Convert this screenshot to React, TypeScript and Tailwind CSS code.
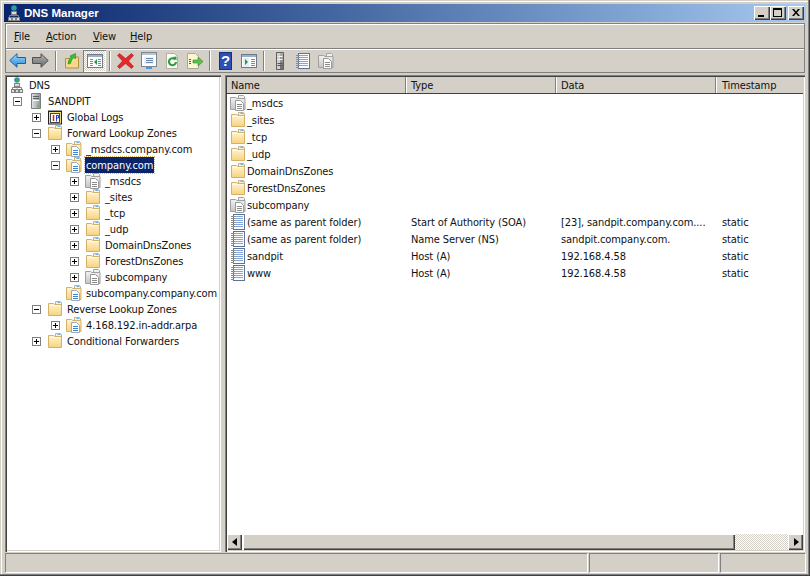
import React from 'react';

const bevelIn =
  'shadow-[inset_1px_1px_0_#808080,inset_2px_2px_0_#404040,inset_-1px_-1px_0_#fff,inset_-2px_-2px_0_#d4d0c8]';
const bevelBtn =
  'shadow-[inset_1px_1px_0_#fff,inset_-1px_-1px_0_#404040,inset_-2px_-2px_0_#808080]';

const Grads = () => (
  <svg width="0" height="0" className="absolute">
    <defs>
      <linearGradient id="fold" x1="0" y1="0" x2="0" y2="1">
        <stop offset="0" stopColor="#fff6d6" />
        <stop offset="1" stopColor="#f8d27c" />
      </linearGradient>
      <linearGradient id="grayfold" x1="0" y1="0" x2="0" y2="1">
        <stop offset="0" stopColor="#f2f2f2" />
        <stop offset="1" stopColor="#c4c4c4" />
      </linearGradient>
      <linearGradient id="tower" x1="0" y1="0" x2="1" y2="0">
        <stop offset="0" stopColor="#e4e6e8" />
        <stop offset="1" stopColor="#8e9296" />
      </linearGradient>
      <linearGradient id="back" x1="0" y1="0" x2="0" y2="1">
        <stop offset="0" stopColor="#a4dcfa" />
        <stop offset="1" stopColor="#1f86dc" />
      </linearGradient>
      <linearGradient id="fwd" x1="0" y1="0" x2="0" y2="1">
        <stop offset="0" stopColor="#b4b4b4" />
        <stop offset="1" stopColor="#6a6a6a" />
      </linearGradient>
    </defs>
  </svg>
);

const Folder = () => (
  <svg width="16" height="16" viewBox="0 0 16 16" className="shrink-0">
    <path d="M8.500 .5h5l1 1v3h-6z" fill="#f6f3e4" stroke="#c4b48a" />
    <rect x="10.500" y="1" width="3" height="1" fill="#6fb0e2" />
    <path d="M1.500 2.500h5l1.500 1h6.500v11h-13z" fill="url(#fold)" stroke="#d3b169" />
    <path d="M2.500 4.500h11" stroke="#fffbe8" />
  </svg>
);

const Doc = ({ x, y, line, edge }: { x: number; y: number; line: string; edge: string }) => (
  <g>
    <path d={`M${x + 0.5} ${y + 0.5}h5l3 3v7h-8z`} fill="#fff" stroke={edge} />
    <path d={`M${x + 2} ${y + 4.5}h5M${x + 2} ${y + 6.5}h5M${x + 2} ${y + 8.5}h5`} stroke={line} />
  </g>
);

const ZoneFolder = () => (
  <svg width="16" height="16" viewBox="0 0 16 16" className="shrink-0">
    <path d="M8.500 .5h5l1 1v3h-6z" fill="#f6f3e4" stroke="#c4b48a" />
    <rect x="10.500" y="1" width="3" height="1" fill="#6fb0e2" />
    <path d="M.5 2.500h5l1.500 1h8v11h-14.500z" fill="url(#fold)" stroke="#d3b169" />
    <Doc x={5} y={5} line="#3f86cc" edge="#98a8b8" />
  </svg>
);

const GrayZone = () => (
  <svg width="16" height="16" viewBox="0 0 16 16" className="shrink-0">
    <path d="M8.500 .5h5l1 1v3h-6z" fill="#f1f1f1" stroke="#a4a4a4" />
    <path d="M.5 2.500h5l1.500 1h8v11h-14.500z" fill="url(#grayfold)" stroke="#a0a0a0" />
    <Doc x={5} y={5} line="#8a8a8a" edge="#9a9a9a" />
  </svg>
);

const RecordIcon = () => (
  <svg width="16" height="16" viewBox="0 0 16 16" className="shrink-0">
    <rect x="3.500" y=".5" width="11" height="15" fill="#fdfdff" stroke="#5f7396" />
    <path d="M5 2.500h8M5 4.500h8M5 6.500h8M5 8.500h8M5 10.500h8M5 12.500h8" stroke="#82a6dc" />
    <path d="M1 2.500h4M1 4.500h4M1 6.500h4M1 8.500h4M1 10.500h4M1 12.500h4M1 14.500h3" stroke="#8c8c8c" />
  </svg>
);

const Server = () => (
  <svg width="16" height="16" viewBox="0 0 16 16" className="shrink-0">
    <path d="M3.500 .5h9v15h-9z" fill="url(#tower)" stroke="#7a7e82" />
    <path d="M5 3.500h6M5 5.500h6" stroke="#5e6266" />
    <path d="M5 7.500h6" stroke="#fff" />
    <rect x="9" y="12" width="2" height="2" fill="#58c62e" />
  </svg>
);

const DnsIcon = () => (
  <svg width="16" height="16" viewBox="0 0 16 16" className="shrink-0">
    <circle cx="8" cy="3" r="2.800" fill="#2a8fd0" />
    <path d="M7 1.500h2l1 2-2 1.500-1-1.500z" fill="#3cae3a" />
    <rect x="5.500" y="6.500" width="5" height="3" fill="#dcdcdc" stroke="#808080" />
    <path d="M8 9.500v2M3.500 12v-1.500h9v1.500" fill="none" stroke="#808080" />
    <rect x="2.500" y="12.500" width="3" height="3" fill="#dcdcdc" stroke="#808080" />
    <rect x="6.500" y="12.500" width="3" height="3" fill="#dcdcdc" stroke="#808080" />
    <rect x="10.500" y="12.500" width="3" height="3" fill="#dcdcdc" stroke="#808080" />
  </svg>
);

const LogsIcon = () => (
  <svg width="16" height="16" viewBox="0 0 16 16" className="shrink-0">
    <path d="M1.500 1.500h13" stroke="#333" strokeDasharray="1 1" />
    <rect x="1.500" y="2.500" width="13" height="12.500" fill="#f7e07a" stroke="#222" />
    <rect x="3.500" y="4.500" width="9" height="9" fill="#fff" stroke="#444" />
    <path d="M6.500 6v6" stroke="#d8201c" strokeWidth="1.500" />
    <path d="M9.500 6.500h2v2.500h-2M9.500 6v6.500" fill="none" stroke="#2440c4" />
  </svg>
);

type Icon = 'folder' | 'zone' | 'gray' | 'logs' | 'server' | 'dns';

const icons: Record<Icon, React.ReactNode> = {
  folder: <Folder />,
  zone: <ZoneFolder />,
  gray: <GrayZone />,
  logs: <LogsIcon />,
  server: <Server />,
  dns: <DnsIcon />,
};

const Expander = ({ open }: { open?: boolean }) => (
  <span className="relative block w-[9px] h-[9px] shrink-0 border border-[#7f7f7f] bg-white">
    <span className="absolute left-[1px] top-[3px] w-[5px] h-[1px] bg-black" />
    {!open && <span className="absolute left-[3px] top-[1px] w-[1px] h-[5px] bg-black" />}
  </span>
);

const indent = ['pl-[6px]', 'pl-[25px]', 'pl-[44px]', 'pl-[63px]'];

type TreeItem = { level: number; icon: Icon; label: string; exp?: 'plus' | 'minus'; selected?: boolean };

const tree: TreeItem[] = [
  { level: 0, icon: 'server', label: 'SANDPIT', exp: 'minus' },
  { level: 1, icon: 'logs', label: 'Global Logs', exp: 'plus' },
  { level: 1, icon: 'folder', label: 'Forward Lookup Zones', exp: 'minus' },
  { level: 2, icon: 'zone', label: '_msdcs.company.com', exp: 'plus' },
  { level: 2, icon: 'zone', label: 'company.com', exp: 'minus', selected: true },
  { level: 3, icon: 'gray', label: '_msdcs', exp: 'plus' },
  { level: 3, icon: 'folder', label: '_sites', exp: 'plus' },
  { level: 3, icon: 'folder', label: '_tcp', exp: 'plus' },
  { level: 3, icon: 'folder', label: '_udp', exp: 'plus' },
  { level: 3, icon: 'folder', label: 'DomainDnsZones', exp: 'plus' },
  { level: 3, icon: 'folder', label: 'ForestDnsZones', exp: 'plus' },
  { level: 3, icon: 'gray', label: 'subcompany', exp: 'plus' },
  { level: 2, icon: 'zone', label: 'subcompany.company.com' },
  { level: 1, icon: 'folder', label: 'Reverse Lookup Zones', exp: 'minus' },
  { level: 2, icon: 'zone', label: '4.168.192.in-addr.arpa', exp: 'plus' },
  { level: 1, icon: 'folder', label: 'Conditional Forwarders', exp: 'plus' },
];

const rows: { icon: 'gray' | 'folder' | 'record'; name: string; type?: string; data?: string; time?: string }[] = [
  { icon: 'gray', name: '_msdcs' },
  { icon: 'folder', name: '_sites' },
  { icon: 'folder', name: '_tcp' },
  { icon: 'folder', name: '_udp' },
  { icon: 'folder', name: 'DomainDnsZones' },
  { icon: 'folder', name: 'ForestDnsZones' },
  { icon: 'gray', name: 'subcompany' },
  { icon: 'record', name: '(same as parent folder)', type: 'Start of Authority (SOA)', data: '[23], sandpit.company.com....', time: 'static' },
  { icon: 'record', name: '(same as parent folder)', type: 'Name Server (NS)', data: 'sandpit.company.com.', time: 'static' },
  { icon: 'record', name: 'sandpit', type: 'Host (A)', data: '192.168.4.58', time: 'static' },
  { icon: 'record', name: 'www', type: 'Host (A)', data: '192.168.4.58', time: 'static' },
];

const Sep = () => <span className="w-[2px] h-[20px] mx-[3px] border-l border-[#808080] bg-white shrink-0" />;

const ToolIcon = ({ children, pressed }: { children: React.ReactNode; pressed?: boolean }) => (
  <span
    className={
      'flex items-center justify-center w-[23px] h-[22px] shrink-0 ' +
      (pressed
        ? 'shadow-[inset_1px_1px_0_#808080,inset_-1px_-1px_0_#fff] bg-[repeating-conic-gradient(#d4d0c8_0_25%,#fff_0_50%)] bg-[length:2px_2px]'
        : '')
    }
  >
    {children}
  </span>
);

const Toolbar = () => (
  <div className="h-[23px] flex items-center">
    <ToolIcon>
      <svg width="17" height="15" viewBox="0 0 17 15">
        <path d="M.8 7.500l7.200-6.800v3.800h8.500v6h-8.500v3.800z" fill="url(#back)" stroke="#1a5ea8" />
      </svg>
    </ToolIcon>
    <ToolIcon>
      <svg width="17" height="15" viewBox="0 0 17 15">
        <path d="M16.200 7.500l-7.200-6.800v3.800h-8.500v6h8.500v3.800z" fill="url(#fwd)" stroke="#505050" />
      </svg>
    </ToolIcon>
    <Sep />
    <ToolIcon>
      <svg width="16" height="16" viewBox="0 0 16 16">
        <path d="M1.500 5.500h4l1-1.500h8v11h-13z" fill="#f8d98c" stroke="#b0913f" />
        <path d="M4 11q0-5 3.500-6.500l-1.500-1.500 5.500-2.500v5.500l-1.500-1.500q-3 2-3.500 6z" fill="#3dbb3a" stroke="#1f8a24" strokeWidth=".6" />
      </svg>
    </ToolIcon>
    <ToolIcon pressed>
      <svg width="16" height="14" viewBox="0 0 16 14">
        <rect x=".5" y=".5" width="15" height="13" fill="#fff" stroke="#6b7b8c" />
        <rect x="1" y="1" width="14" height="2" fill="#9fb0c2" />
        <path d="M3 5.500h3M3 7.500h3M3 9.500h3M3 11.500h3M11 5.500h3M11 7.500h3M11 9.500h3M11 11.500h3" stroke="#7d8a96" />
        <path d="M10 5l-3 3 3 3z" fill="#1e9a4a" />
      </svg>
    </ToolIcon>
    <Sep />
    <ToolIcon>
      <svg width="17" height="16" viewBox="0 0 17 16">
        <path d="M2.500 .5l6 5 6-5 2 2-5 5.500 5 5.500-2 2-6-5-6 5-2-2 5-5.500-5-5.500z" fill="#e5282a" stroke="#a81c1c" strokeWidth=".6" />
      </svg>
    </ToolIcon>
    <ToolIcon>
      <svg width="16" height="17" viewBox="0 0 16 17">
        <rect x=".5" y=".5" width="15" height="14" fill="#fff" stroke="#7b8794" />
        <rect x="1" y="1" width="14" height="2" fill="#b7c3cf" />
        <rect x="3" y="5" width="10" height="7" fill="#eaf1f8" />
        <path d="M5 6.500h7M5 8.500h7M5 10.500h7" stroke="#6a87ad" />
        <rect x="5" y="15" width="6" height="2" fill="#3aa0e8" />
      </svg>
    </ToolIcon>
    <ToolIcon>
      <svg width="14" height="16" viewBox="0 0 14 16">
        <path d="M1.500 .5h8l3 3v12h-11z" fill="#fdfdf8" stroke="#b0b0a4" />
        <path d="M10.200 6.500a3.500 3.500 0 1 0 .8 2.500" fill="none" stroke="#2f9e3a" strokeWidth="2.200" />
        <path d="M7.500 4l4-.5v4z" fill="#2f9e3a" />
      </svg>
    </ToolIcon>
    <ToolIcon>
      <svg width="18" height="16" viewBox="0 0 18 16">
        <path d="M1.500 .5h8l3 3v12h-11z" fill="#fdf6d4" stroke="#a8a89a" />
        <path d="M3 6.500h2M3 8.500h2M3 10.500h2" stroke="#555" />
        <path d="M7 7h5v-3l5 4.500-5 4.500v-3h-5z" fill="#5cc04a" stroke="#2f8a2a" strokeWidth=".6" />
      </svg>
    </ToolIcon>
    <Sep />
    <ToolIcon>
      <span className="flex items-center justify-center w-[13px] h-[18px] bg-[#2b4fb8] border border-[#1b2f80] text-white font-bold text-[15px] leading-none [font-family:'Liberation_Sans',sans-serif]">
        ?
      </span>
    </ToolIcon>
    <ToolIcon>
      <svg width="16" height="14" viewBox="0 0 16 14">
        <rect x=".5" y=".5" width="15" height="13" fill="#fff" stroke="#6b7b8c" />
        <rect x="1" y="1" width="14" height="2" fill="#9fb0c2" />
        <rect x="2" y="4" width="6" height="9" fill="#e4f0f4" />
        <path d="M10 5.500h4M10 7.500h4M10 9.500h4M10 11.500h4" stroke="#7d8a96" />
        <path d="M4 5l3 3-3 3z" fill="#1e9a4a" />
      </svg>
    </ToolIcon>
    <Sep />
    <ToolIcon>
      <svg width="10" height="18" viewBox="0 0 10 18">
        <path d="M1.500 .5h7v17h-7z" fill="url(#fwd)" stroke="#5f5f5f" />
        <path d="M2 1h3v16h-3z" fill="#d0d0d0" />
        <path d="M2.500 4.500h5M2.500 7.500h5" stroke="#f4f4f4" />
        <path d="M2.500 11.500h5M2.500 13.500h5" stroke="#555" />
      </svg>
    </ToolIcon>
    <ToolIcon>
      <RecordIcon />
    </ToolIcon>
    <ToolIcon>
      <GrayZone />
    </ToolIcon>
  </div>
);

const Menu = ({ first, rest, w }: { first: string; rest: string; w: string }) => (
  <span className={`${w} h-[16px] leading-[18px]`}>
    <span className="underline">{first}</span>
    {rest}
  </span>
);

const Arrow = ({ dir }: { dir: 'l' | 'r' }) => (
  <span className={`flex items-center justify-center w-[15px] h-[16px] shrink-0 bg-[#d4d0c8] ${bevelBtn}`}>
    <svg width="6" height="8" viewBox="0 0 6 8">
      <path d={dir === 'l' ? 'M5 0v8l-5-4z' : 'M1 0v8l5-4z'} fill="#000" />
    </svg>
  </span>
);

export default function App() {
  return (
    <div className="relative w-[810px] h-[576px] p-[4px] flex flex-col bg-[#d4d0c8] text-[11px] leading-[16px] tracking-[-0.1px] text-[#111] overflow-hidden [font-family:'DejaVu_Sans_Condensed','Liberation_Sans',sans-serif] shadow-[inset_-1px_-1px_0_#404040,inset_-2px_-2px_0_#808080,inset_1px_1px_0_#d4d0c8,inset_2px_2px_0_#fff]">
      <Grads />
      {/* title bar */}
      <div className="h-[18px] shrink-0 flex items-center pl-[2px] pr-[2px] bg-gradient-to-r from-[#0a246a] to-[#a6caf0]">
        <DnsIcon />
        <span className="ml-[2px] text-white font-bold text-[11.5px] tracking-normal flex-1 [font-family:'Liberation_Sans',sans-serif]">DNS Manager</span>
        <div className="flex">
          {['min', 'max', 'close'].map((b) => (
            <span
              key={b}
              className={`relative w-[16px] h-[14px] bg-[#d4d0c8] ${bevelBtn} ${b === 'close' ? 'ml-[2px]' : ''}`}
            >
              {b === 'min' && <span className="absolute left-[4px] top-[9px] w-[6px] h-[2px] bg-black" />}
              {b === 'max' && <span className="absolute left-[3px] top-[2px] w-[9px] h-[9px] border border-black border-t-2" />}
              {b === 'close' && (
                <svg className="absolute left-[4px] top-[3px]" width="8" height="7" viewBox="0 0 8 7">
                  <path d="M0 0h2l2 2.500 2-2.500h2l-3 3.500 3 3.500h-2l-2-2.500-2 2.500h-2l3-3.500z" fill="#000" />
                </svg>
              )}
            </span>
          ))}
        </div>
      </div>

      {/* menu */}
      <div className="mt-[1px] h-[25px] shrink-0 mx-[1px] flex items-center border-t border-l border-r border-[#808080] shadow-[inset_1px_1px_0_#fff]">
        <div className="flex pl-[8px]">
          <Menu first="F" rest="ile" w="w-[32px]" />
          <Menu first="A" rest="ction" w="w-[47px]" />
          <Menu first="V" rest="iew" w="w-[37px]" />
          <Menu first="H" rest="elp" w="w-[30px]" />
        </div>
      </div>

      {/* toolbar */}
      <div className="h-[25px] shrink-0 mx-[1px] border border-[#808080] shadow-[inset_0_1px_0_#fff]">
        <Toolbar />
      </div>

      {/* panes */}
      <div className="flex-1 min-h-0 flex mt-[2px] mx-[1px] gap-[4px]">
        <div className={`w-[216px] shrink-0 bg-white pt-[2px] pl-[2px] ${bevelIn}`}>
          <div className="h-[16px] flex items-center pl-[2px]">
            <DnsIcon />
            <span className="ml-[4px] h-[16px] leading-[18px]">DNS</span>
          </div>
          {tree.map((t, i) => (
            <div key={i} className={`h-[16px] flex items-center ${indent[t.level]}`}>
              {t.exp ? <Expander open={t.exp === 'minus'} /> : <span className="w-[9px] shrink-0" />}
              <span className="ml-[6px]">{icons[t.icon]}</span>
              <span
                className={
                  'ml-[3px] px-[1px] h-[16px] leading-[18px] whitespace-nowrap ' +
                  (t.selected ? 'bg-[#0a246a] text-white outline-1 outline-dotted outline-[#d4b060]' : '')
                }
              >
                {t.label}
              </span>
            </div>
          ))}
        </div>

        <div className={`flex-1 min-w-0 flex flex-col bg-white p-[2px] ${bevelIn}`}>
          <div className="h-[17px] shrink-0 flex bg-[#d4d0c8] border-b border-[#404040]">
            {[
              ['Name', 'w-[179px] pl-[4px]'],
              ['Type', 'w-[150px] pl-[5px]'],
              ['Data', 'w-[160px] pl-[5px]'],
              ['Timestamp', 'flex-1 pl-[6px]'],
            ].map(([h, w], i) => (
              <div key={h} className={`${w} leading-[18px] ${i < 3 ? 'border-r border-r-[#808080] shadow-[1px_0_0_#fff]' : ''}`}>
                {h}
              </div>
            ))}
          </div>
          <div className="flex-1 min-h-0">
            {rows.map((r, i) => (
              <div key={i} className="h-[17px] flex items-center whitespace-nowrap leading-[19px]">
                <div className="w-[179px] h-[17px] flex items-center pl-[3px]">
                  {r.icon === 'gray' ? <GrayZone /> : r.icon === 'folder' ? <Folder /> : <RecordIcon />}
                  <span className="ml-[1px] h-[17px]">{r.name}</span>
                </div>
                <div className="w-[150px] h-[17px] pl-[5px]">{r.type}</div>
                <div className="w-[160px] h-[17px] pl-[5px]">{r.data}</div>
                <div className="flex-1 h-[17px] pl-[6px]">{r.time}</div>
              </div>
            ))}
          </div>
          <div className="h-[16px] shrink-0 flex">
            <Arrow dir="l" />
            <span className={`w-[492px] ml-[1px] shrink-0 bg-[#d4d0c8] ${bevelBtn}`} />
            <span className="flex-1 bg-[repeating-conic-gradient(#d4d0c8_0_25%,#fff_0_50%)] bg-[length:2px_2px]" />
            <Arrow dir="r" />
          </div>
        </div>
      </div>

      {/* status bar */}
      <div className="h-[19px] shrink-0 mt-[1px] mx-[1px] flex gap-[2px]">
        <div className="w-[582px] border-t border-l border-[#808080] shadow-[1px_1px_0_#fff]" />
        <div className="w-[129px] border-t border-l border-[#808080] shadow-[1px_1px_0_#fff]" />
        <div className="flex-1 border-t border-l border-[#808080] shadow-[1px_1px_0_#fff]" />
      </div>
    </div>
  );
}
